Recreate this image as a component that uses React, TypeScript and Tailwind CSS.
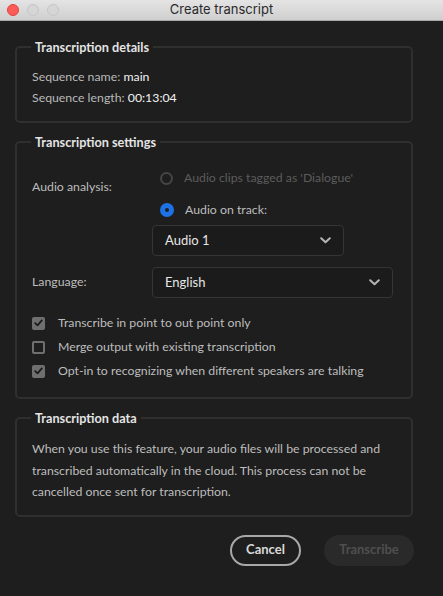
import React from "react";

const font = { fontFamily: "Lato, 'Open Sans', sans-serif" };

function Chevron() {
  return (
    <svg width="11" height="7" viewBox="0 0 11 7" className="text-[#b5b5b5]">
      <path d="M1.2 1.2 L5.5 5.3 L9.8 1.2" fill="none" stroke="currentColor" strokeWidth="2" strokeLinecap="round" strokeLinejoin="round" />
    </svg>
  );
}

function Select({ value, width }: { value: string; width: string }) {
  return (
    <div className={`${width} h-[31px] flex items-center justify-between pl-[12px] pr-[12px] rounded-[4px] border border-[#353535] bg-[#1b1b1b] text-[#e6e6e6] text-[13px]`}>
      <span>{value}</span>
      <Chevron />
    </div>
  );
}

function Radio({ checked, disabled, label }: { checked?: boolean; disabled?: boolean; label: string }) {
  return (
    <div className="flex items-center h-[22px] gap-[11px]">
      {checked ? (
        <span className="w-[14px] h-[14px] rounded-full border-[5px] border-[#1d73e6] bg-[#1e1e1e]" />
      ) : (
        <span className="w-[13px] h-[13px] rounded-full border-2 border-[#454545]" />
      )}
      <span className={disabled ? "text-[#5c5c5c]" : "text-[#bdbdbd]"}>{label}</span>
    </div>
  );
}

function Checkbox({ checked, label }: { checked?: boolean; label: string }) {
  return (
    <div className="flex items-center h-[24px] gap-[13px]">
      {checked ? (
        <span className="w-[13px] h-[13px] rounded-[2px] bg-[#6f6f6f] flex items-center justify-center">
          <svg width="9" height="8" viewBox="0 0 9 8">
            <path d="M1.2 4.2 L3.5 6.4 L7.8 1.4" fill="none" stroke="#1c1c1c" strokeWidth="1.8" strokeLinecap="round" strokeLinejoin="round" />
          </svg>
        </span>
      ) : (
        <span className="w-[13px] h-[13px] rounded-[2px] border-2 border-[#6f6f6f]" />
      )}
      <span className="text-[#bdbdbd]">{label}</span>
    </div>
  );
}

function Group({ title, children, className }: { title: string; children: React.ReactNode; className?: string }) {
  return (
    <fieldset className={`w-[398px] border-2 border-[#2f2f2f] rounded-[5px] pl-[15px] pr-[14px] ${className ?? ""}`}>
      <legend className="ml-[-1px] px-[4px] text-[12.7px] font-bold text-[#e4e4e4] leading-[18px]">{title}</legend>
      {children}
    </fieldset>
  );
}

export default function App() {
  return (
    <div className="w-[443px] h-[596px] bg-[#1e1e1e] flex flex-col overflow-hidden text-[12.3px]" style={font}>
      {/* Title bar */}
      <div className="relative h-[21px] flex items-center justify-center bg-gradient-to-b from-[#e4e4e4] to-[#cfcfcf] border-b border-[#a9a9a9]">
        <div className="absolute left-[7px] top-[4px] flex gap-[8px]">
          <span className="w-[12px] h-[12px] rounded-full bg-[#fc5b57] border border-[#e0443e]" />
          <span className="w-[12px] h-[12px] rounded-full bg-[#d6d6d6] border border-[#c6c6c6]" />
          <span className="w-[12px] h-[12px] rounded-full bg-[#d6d6d6] border border-[#c6c6c6]" />
        </div>
        <span className="text-[13px] text-[#2a2a2a]" style={{ fontFamily: "Inter, 'Open Sans', sans-serif" }}>
          Create transcript
        </span>
      </div>

      <div className="pl-[15px] pt-[17px] flex flex-col">
        <Group title="Transcription details" className="pt-[10px] pb-[13px]">
          <div className="leading-[21px] text-[#b9b9b9]">
            <div>
              Sequence name: <span className="text-[#f2f2f2]">main</span>
            </div>
            <div>
              Sequence length: <span className="text-[#f2f2f2]">00:13:04</span>
            </div>
          </div>
        </Group>

        <Group title="Transcription settings" className="mt-[10px] pt-[16px] pb-[14px]">
          <div className="flex">
            <div className="w-[120px] text-[#bdbdbd] pt-[11px]">Audio analysis:</div>
            <div className="flex flex-col">
              <div className="pl-[8px] flex flex-col gap-[10px]">
                <Radio disabled label="Audio clips tagged as 'Dialogue'" />
                <Radio checked label="Audio on track:" />
              </div>
              <div className="mt-[4px]">
                <Select value="Audio 1" width="w-[192px]" />
              </div>
            </div>
          </div>
          <div className="flex items-center mt-[11px]">
            <div className="w-[120px] text-[#bdbdbd]">Language:</div>
            <Select value="English" width="w-[241px]" />
          </div>
          <div className="mt-[13px] flex flex-col">
            <Checkbox checked label="Transcribe in point to out point only" />
            <Checkbox label="Merge output with existing transcription" />
            <Checkbox checked label="Opt-in to recognizing when different speakers are talking" />
          </div>
        </Group>

        <Group title="Transcription data" className="mt-[10px] pt-[11px] pb-[12px]">
          <p className="leading-[21.5px] text-[#bdbdbd]">
            When you use this feature, your audio files will be processed and transcribed automatically in the cloud.
            This process can not be cancelled once sent for transcription.
          </p>
        </Group>

        <div className="w-[399px] flex justify-end gap-[23px] mt-[18px]">
          <button className="w-[71px] h-[31px] rounded-full border-2 border-[#a8a8a8] text-[#d9d9d9] font-bold text-[13px]">
            Cancel
          </button>
          <button className="w-[90px] h-[31px] rounded-full bg-[#2a2a2a] text-[#4f4f4f] font-bold text-[13px]">
            Transcribe
          </button>
        </div>
      </div>
    </div>
  );
}
